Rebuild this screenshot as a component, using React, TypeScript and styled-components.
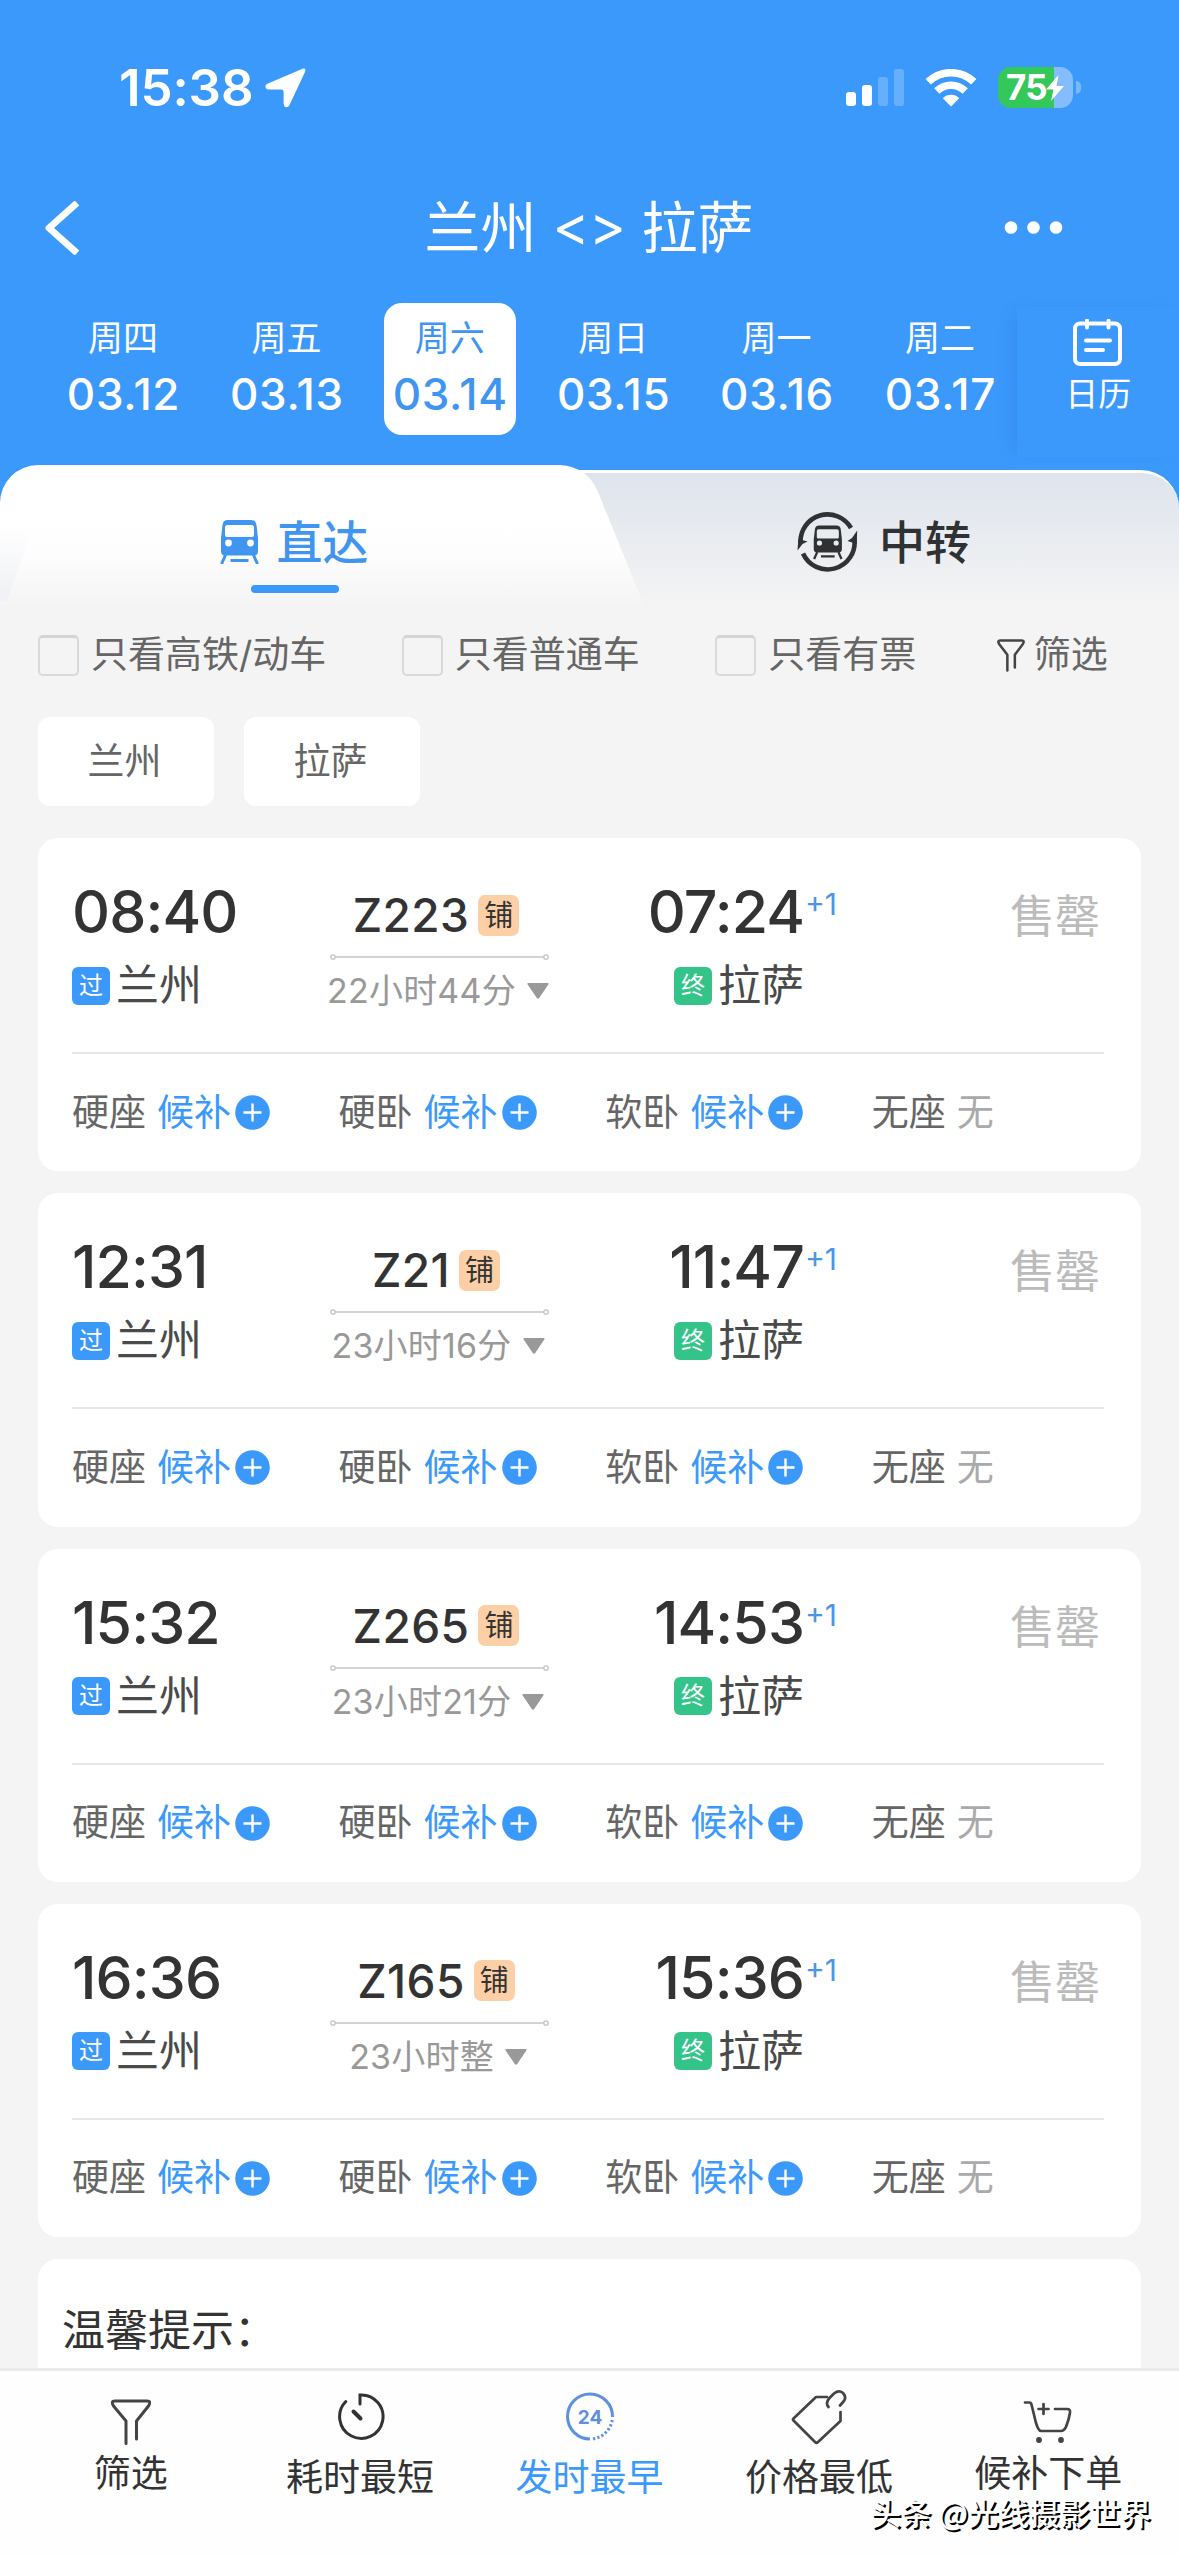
import React from "react";
import styled, { createGlobalStyle } from "styled-components";

const BLUE = "#3b99fc";
const INK = "#333333";

const GlobalStyle = createGlobalStyle`
  * { box-sizing: border-box; }
  body {
    margin: 0;
    background: #f4f4f4;
    font-family: Inter, "Noto Sans CJK SC", sans-serif;
    color: ${INK};
  }
  svg { display: block; flex: none; }
`;

const Screen = styled.div`
  position: relative;
  width: 1179px;
  height: 2556px;
  display: flex;
  flex-direction: column;
  overflow: hidden;
  background: #f4f4f4;
  white-space: nowrap;
`;

/* ---------- header ---------- */

const Header = styled.header`
  background: ${BLUE};
  color: #fff;
  height: 465px;
  flex: none;
`;

const StatusBar = styled.div`
  height: 175px;
  padding: 0 98px 0 119px;
  display: flex;
  align-items: center;
`;

const Clock = styled.span`
  font-size: 51px;
  font-weight: 600;
  line-height: 60px;
  letter-spacing: -0.1px;
  margin-right: 11px;
`;

const StatusIcons = styled.div`
  margin-left: auto;
  display: flex;
  align-items: center;
  gap: 21px;
`;

const Power = styled.div`
  display: flex;
  align-items: center;
  gap: 3px;
`;

const Battery = styled.div`
  display: flex;
  align-items: center;
  width: 75px;
  height: 41px;
  padding-left: 8px;
  border-radius: 13px;
  background: linear-gradient(to right, #34c759 56px, #83bdfd 56px);
  font-size: 35px;
  font-weight: 700;
  letter-spacing: -0.8px;
  line-height: 41px;
`;

const BatteryBolt = styled.svg`
  margin-left: -1px;
`;

const BatteryNub = styled.i`
  width: 5px;
  height: 13px;
  border-radius: 0 5px 5px 0;
  background: #79b8fd;
`;

const NavBar = styled.div`
  height: 106px;
  padding: 0 115px 0 44px;
  display: grid;
  grid-template-columns: 150px 1fr 80px;
  align-items: center;
  justify-items: start;
`;

const Title = styled.h1`
  margin: 0;
  justify-self: center;
  display: flex;
  align-items: center;
  gap: 16px;
  font-size: 56px;
  font-weight: 400;
  line-height: 66px;
`;

const Swap = styled.span`
  padding-bottom: 4px;
  font-size: 56px;
  letter-spacing: -0.5px;
`;

const NavMore = styled.div`
  justify-self: end;
`;

const DateStrip = styled.div`
  display: flex;
  align-items: flex-start;
  padding: 22px 0 0 57px;
`;

const Day = styled.div<{ $active?: boolean }>`
  width: 132px;
  height: 132px;
  margin-right: 31.4px;
  padding-top: 15px;
  border-radius: 18px;
  display: flex;
  flex-direction: column;
  align-items: center;
  gap: 14px;
  background: ${(p) => (p.$active ? "#fff" : "transparent")};
  color: ${(p) => (p.$active ? "#3f95f0" : "#fff")};
`;

const Weekday = styled.span`
  font-size: 35px;
  line-height: 40px;
`;

const DayDate = styled.span`
  padding-left: 1px;
  font-size: 44px;
  font-weight: 450;
  line-height: 45px;
  letter-spacing: 0.7px;
`;

const Calendar = styled.div`
  flex: 1;
  height: 150px;
  margin: 4px 0 0 -20px;
  padding-top: 12px;
  display: flex;
  flex-direction: column;
  align-items: center;
  gap: 7px;
  font-size: 33px;
  line-height: 40px;
  background: ${BLUE};
  box-shadow: -8px 0 16px -6px rgba(30, 90, 170, 0.2);
`;

/* ---------- tabs ---------- */

const Tabs = styled.nav`
  display: flex;
  height: 145px;
  flex: none;
  background: linear-gradient(${BLUE} 60px, #f4f4f4 60px);
`;

const DirectTab = styled.div`
  position: relative;
  z-index: 1;
  width: 648px;
  padding: 45px 58px 0 0;
  background: linear-gradient(#fff 60px, #fdfdfe 90px, #f4f4f4 142px);
  clip-path: path("M0 38 A38 38 0 0 1 38 0 H560 Q588 2 598 27 L646 145 H0 Z");
  color: #3f95f0;
  &::before {
    content: "";
    position: absolute;
    left: 0;
    top: 60px;
    width: 34px;
    height: 76px;
    background: linear-gradient(rgba(236, 240, 244, 0), rgba(236, 240, 244, 0.7));
    clip-path: polygon(0 0, 100% 0, 20% 100%, 0 100%);
  }
`;

const TransferTab = styled.div`
  flex: 1;
  margin: 5px 0 0 -88px;
  padding: 37px 0 0 31px;
  border-top: 3px solid #fff;
  border-radius: 0 38px 0 0;
  background: linear-gradient(#dee4ed, #f4f4f4 136px);
  color: #2f3133;
`;

const TabLabel = styled.div<{ $gap: number }>`
  display: flex;
  align-items: center;
  justify-content: center;
  gap: ${(p) => p.$gap}px;
  height: 64px;
  padding-right: 2px;
  font-size: 46px;
  font-weight: 500;
  line-height: 64px;
`;

const TabUnderline = styled.i`
  display: block;
  width: 88px;
  height: 8px;
  margin: 11px auto 0;
  border-radius: 4px;
  background: ${BLUE};
`;

/* ---------- filters ---------- */

const FilterRow = styled.div`
  display: flex;
  align-items: center;
  height: 90px;
  flex: none;
  padding-left: 38px;
  font-size: 37px;
  line-height: 44px;
  color: #666;
`;

const CheckItem = styled.label`
  display: flex;
  align-items: center;
  gap: 12px;
  margin-right: 75.5px;
`;

const Box = styled.i`
  width: 41px;
  height: 41px;
  border: 2px solid #d9d9d9;
  border-top: 3px solid #d4d4d4;
  border-radius: 5px;
`;

const FilterButton = styled.div`
  display: flex;
  align-items: center;
  gap: 9px;
  margin-left: 5px;
`;

const Chips = styled.div`
  display: flex;
  flex: none;
  gap: 30px;
  padding: 17px 38px 32px;
`;

const Chip = styled.span`
  width: 176px;
  height: 89px;
  padding-right: 3px;
  border-radius: 12px;
  background: #fff;
  color: #666;
  font-size: 37px;
  line-height: 89px;
  text-align: center;
`;

/* ---------- train list ---------- */

const List = styled.main`
  flex: 1;
  min-height: 0;
  overflow: hidden;
  display: flex;
  flex-direction: column;
  gap: 22px;
  padding: 0 38px;
`;

const Card = styled.article`
  flex: none;
  height: 333.25px;
  padding: 0 37px 0 34px;
  border-radius: 20px;
  background: #fff;
`;

const Summary = styled.div`
  display: flex;
  align-items: flex-start;
  height: 216px;
  padding-top: 44px;
  border-bottom: 2px solid #e6e6e6;
`;

const Stop = styled.div<{ $width: number; $end?: boolean }>`
  width: ${(p) => p.$width}px;
  display: flex;
  flex-direction: column;
  align-items: ${(p) => (p.$end ? "flex-end" : "flex-start")};
  gap: 20px;
`;

const Time = styled.span`
  font-size: 59px;
  font-weight: 450;
  line-height: 60px;
  letter-spacing: -0.9px;
`;

const Station = styled.div`
  display: flex;
  align-items: center;
  gap: 6px;
  font-size: 43px;
  line-height: 47px;
  color: #4a4a4a;
`;

const StopBadge = styled.i<{ $color: string }>`
  width: 38px;
  height: 38px;
  border-radius: 6px;
  background: ${(p) => p.$color};
  color: #fff;
  font-style: normal;
  font-size: 24px;
  line-height: 38px;
  text-align: center;
`;

const Route = styled.div`
  width: 219px;
  padding-top: 8px;
  display: flex;
  flex-direction: column;
  align-items: center;
`;

const TrainNo = styled.div`
  display: flex;
  align-items: center;
  gap: 9px;
  margin-bottom: 13px;
  padding-right: 7px;
  font-size: 46px;
  font-weight: 450;
  letter-spacing: 0.4px;
  line-height: 50px;
`;

const BerthBadge = styled.i`
  width: 41px;
  height: 41px;
  border-radius: 7px;
  background: #fdcfa6;
  font-style: normal;
  font-weight: 400;
  font-size: 29px;
  letter-spacing: 0;
  line-height: 41px;
  text-align: center;
`;

const Duration = styled.div`
  display: flex;
  align-items: center;
  gap: 11px;
  margin-top: 10px;
  padding-right: 3px;
  font-size: 34px;
  line-height: 40px;
  letter-spacing: 0.2px;
  color: #999;
`;

const NextDay = styled.span`
  flex: 1;
  padding: 4px 0 0 1px;
  font-size: 30px;
  line-height: 36px;
  color: #4a96e6;
`;

const SoldOut = styled.span`
  font-size: 45px;
  line-height: 69px;
  margin-right: 4px;
  color: #bbb;
`;

const Seats = styled.div`
  display: grid;
  grid-template-columns: repeat(3, 266.6px) 1fr;
  align-items: center;
  height: 117px;
  font-size: 37px;
  line-height: 44px;
  color: #666;
`;

const Seat = styled.div`
  display: flex;
  align-items: center;
  gap: 11px;
`;

const Waitlist = styled.span`
  display: flex;
  align-items: center;
  gap: 4px;
  color: ${BLUE};
`;

const NoSeat = styled.span`
  color: #aaa;
`;

const Tips = styled.section`
  flex: none;
  height: 200px;
  padding: 45px 24px;
  border-radius: 20px;
  background: #fff;
  font-size: 43px;
  line-height: 52px;
`;

/* ---------- bottom bar ---------- */

const BottomBar = styled.footer`
  flex: none;
  display: flex;
  height: 188px;
  padding: 0 16px;
  border-top: 3px solid #ebebeb;
  background: #fefefe;
`;

const SortItem = styled.div<{ $active?: boolean; $raised?: boolean }>`
  flex: 1;
  display: flex;
  flex-direction: column;
  align-items: center;
  gap: ${(p) => (p.$raised ? 8 : 12)}px;
  padding-top: 16px;
  font-size: 37px;
  line-height: 37px;
  color: ${(p) => (p.$active ? BLUE : INK)};
`;

const Watermark = styled.div`
  position: absolute;
  right: 28px;
  bottom: 28px;
  font-family: "Noto Sans CJK SC", sans-serif;
  font-size: 30.5px;
  font-weight: 500;
  line-height: 31px;
  color: #fff;
  text-shadow: 2px 2px 0 #000;
`;

/* ---------- icons ---------- */

const LocationIcon = () => (
  <svg width="41" height="40" viewBox="0 0 41 40" fill="#fff">
    <path d="M37.500 .8Q41.200-.4 40.200 3.500L24.500 37Q23 40 20.500 39Q18.600 38.200 18.600 35V24Q18.600 21.600 16.300 21.600H5Q1.200 21.600 .5 19.300Q-.2 17 3 15.500Z" />
  </svg>
);

const SignalIcon = () => (
  <svg width="59" height="38" viewBox="0 0 59 38" fill="#fff">
    <rect x="1" y="23" width="10" height="14" rx="3" />
    <rect x="17" y="16" width="10" height="21" rx="3" />
    <rect x="33" y="8" width="10" height="29" rx="3" opacity=".22" />
    <rect x="49" y="0" width="10" height="37" rx="3" opacity=".22" />
  </svg>
);

const WifiIcon = () => (
  <svg width="52" height="38" viewBox="0 0 52 38" fill="none" stroke="#fff">
    <path d="M3.200 12.800A33 33 0 0 1 48.800 12.800" strokeWidth="7.500" />
    <path d="M11.800 22A20.500 20.500 0 0 1 40.200 22" strokeWidth="7.500" />
    <path d="M26 37.500L17.800 29.200A11.600 11.600 0 0 1 34.200 29.200Z" fill="#fff" stroke="none" />
  </svg>
);

const BackIcon = () => (
  <svg width="38" height="54" viewBox="0 0 38 54" fill="none" stroke="#fff" strokeWidth="6.800">
    <path d="M33 2L5 27L33 52" strokeLinejoin="round" />
  </svg>
);

const MoreIcon = () => (
  <svg width="60" height="14" viewBox="0 0 60 14" fill="#fff">
    <circle cx="7" cy="6.500" r="6.300" />
    <circle cx="29.500" cy="6.500" r="6.300" />
    <circle cx="52" cy="6.500" r="6.300" />
  </svg>
);

const CalendarIcon = () => (
  <svg width="50" height="48" viewBox="0 0 50 48" fill="none" stroke="#fff" strokeWidth="4" strokeLinecap="round">
    <path d="M11 4.500H7a5 5 0 0 0-5 5V40a5 5 0 0 0 5 5H42a5 5 0 0 0 5-5V9.500a5 5 0 0 0-5-5H38M17 4.500H32M14 1.500V8.500M35.500 1.500V8.500M13 21.500H37M13 31H30" />
  </svg>
);

const TrainGlyph = ({ hole }: { hole: string }) => (
  <>
    <path
      fill="currentColor"
      fillRule="evenodd"
      d="M8 0H31Q36 0 36.500 5L38 18V31Q38 35.500 34 35.500H5Q1 35.500 1 31V18L2.500 5Q3 0 8 0ZM7.500 5Q5 5 5 7.500V15Q5 17 7 17H32Q34 17 34 15V7.500Q34 5 31.500 5Z"
    />
    <circle cx="8.500" cy="23" r="3.400" fill={hole} />
    <circle cx="30.500" cy="23" r="3.400" fill={hole} />
    <path d="M5.500 35L1.500 44M33.500 35L37.500 44M10.500 40.500H28.500" fill="none" stroke="currentColor" strokeWidth="3" />
  </>
);

const TrainIcon = () => (
  <svg width="39" height="44" viewBox="0 0 39 44">
    <TrainGlyph hole="#fff" />
  </svg>
);

const TransferIcon = () => (
  <svg width="62" height="62" viewBox="0 0 62 62">
    <g fill="none" stroke="currentColor" strokeWidth="4.600">
      <path d="M3.600 32A27 27 0 0 1 54 17" />
      <path d="M57.400 28A27 27 0 0 1 6 42.500" />
    </g>
    <path fill="currentColor" d="M1.300 28L10.500 30.500L5.500 33L.5 39.500ZM59.700 33L50.500 30L55 27L60.200 19.500Z" />
    <g transform="translate(16 14.500) scale(.76)">
      <TrainGlyph hole="#e9edf2" />
    </g>
  </svg>
);

const FunnelIcon = () => (
  <svg
    width="28"
    height="33"
    viewBox="0 0 40 47"
    fill="none"
    stroke="#444"
    strokeWidth="3.600"
    strokeLinejoin="round"
    strokeLinecap="round"
  >
    <path d="M14.800 45V22.500L3 7Q.2 2 4.500 2H35.500Q39.800 2 37 7L25.500 22.500V40.500" />
  </svg>
);

const RouteLine = () => (
  <svg width="219" height="8" viewBox="0 0 219 8" fill="none" stroke="#c4c4c4" strokeWidth="1.300">
    <circle cx="3" cy="4" r="2.200" />
    <path d="M5.200 4H213.800" strokeWidth="1.500" />
    <circle cx="216" cy="4" r="2.200" />
  </svg>
);

const DownIcon = () => (
  <svg width="22" height="16" viewBox="0 0 22 16">
    <path d="M1.500 0H20.500Q22.500 0 21 2L12.200 15Q11 16.500 9.800 15L1 2Q-.5 0 1.500 0Z" fill="#999" />
  </svg>
);

const PlusIcon = () => (
  <svg width="35" height="35" viewBox="0 0 35 35">
    <circle cx="17.500" cy="17.500" r="17.300" fill={BLUE} />
    <path d="M8.500 17.500H26.500M17.500 8.500V26.500" stroke="#fff" strokeWidth="2.400" />
  </svg>
);

const TimerIcon = () => (
  <svg width="50" height="60" viewBox="0 0 50 60" fill="none" stroke="#333" strokeWidth="3" strokeLinecap="round">
    <path d="M10.800 14.500A21.700 21.700 0 1 0 25 8V17" />
    <path d="M18.500 24.500L25.500 31.500" strokeWidth="4" />
  </svg>
);

const Clock24Icon = () => (
  <svg width="54" height="60" viewBox="0 0 54 60" fill="none" stroke="#5f8fe0" strokeWidth="3">
    <path d="M27 52A22.500 22.500 0 1 1 49.500 30" />
    <path d="M49.200 33A22.500 22.500 0 0 1 28 52" strokeDasharray="2.200 2.200" />
    <text x="27" y="36.500" textAnchor="middle" fill="#5f8fe0" stroke="none" fontSize="19" fontWeight="700">
      24
    </text>
  </svg>
);

const TagIcon = () => (
  <svg width="56" height="60" viewBox="0 0 56 60" fill="none" stroke="#444" strokeWidth="2.700" strokeLinejoin="round" strokeLinecap="round">
    <path d="M36 10H25L2.500 31.500Q1.500 32.500 2.500 33.500L24 55Q25.500 56.500 27 55L49.500 34V25" />
    <path d="M37.500 20Q34 16 38.500 11L43 6.500Q48 2.500 52 6Q56 10.500 52.500 14.500L49 18.500" />
  </svg>
);

const CartIcon = () => (
  <svg width="50" height="60" viewBox="0 0 50 60" fill="none" stroke="#444" strokeWidth="2.700" strokeLinejoin="round" strokeLinecap="round">
    <path d="M2 15.500H6.500Q8 15.500 8.500 17.500L13 36Q15.500 44 18 44H38Q41 44 43 40Q46 32.500 47 25.500Q47.500 22 44 22H32" />
    <path d="M15.500 22H25.500M20.500 17V27" />
    <circle cx="16" cy="53" r="2.900" fill="#444" stroke="none" />
    <circle cx="38" cy="53" r="2.900" fill="#444" stroke="none" />
  </svg>
);

const FunnelSortIcon = () => (
  <svg width="44" height="60" viewBox="0 0 44 60" fill="none" stroke="#444" strokeWidth="3" strokeLinejoin="round" strokeLinecap="round">
    <path d="M17 56.500V34L4.500 19Q1.500 14 6 14H38Q42.500 14 39.500 19L27.500 34V52" />
  </svg>
);

/* ---------- data ---------- */

const days = [
  ["周四", "03.12"],
  ["周五", "03.13"],
  ["周六", "03.14"],
  ["周日", "03.15"],
  ["周一", "03.16"],
  ["周二", "03.17"],
];

const trains = [
  { no: "Z223", depart: "08:40", arrive: "07:24", duration: "22小时44分" },
  { no: "Z21", depart: "12:31", arrive: "11:47", duration: "23小时16分" },
  { no: "Z265", depart: "15:32", arrive: "14:53", duration: "23小时21分" },
  { no: "Z165", depart: "16:36", arrive: "15:36", duration: "23小时整" },
];

const TrainCard = ({ train }: { train: (typeof trains)[number] }) => (
  <Card>
    <Summary>
      <Stop $width={258}>
        <Time>{train.depart}</Time>
        <Station>
          <StopBadge $color={BLUE}>过</StopBadge>
          兰州
        </Station>
      </Stop>
      <Route>
        <TrainNo>
          {train.no}
          <BerthBadge>铺</BerthBadge>
        </TrainNo>
        <RouteLine />
        <Duration>
          {train.duration}
          <DownIcon />
        </Duration>
      </Route>
      <Stop $width={255} $end>
        <Time>{train.arrive}</Time>
        <Station>
          <StopBadge $color="#34c48a">终</StopBadge>
          拉萨
        </Station>
      </Stop>
      <NextDay>+1</NextDay>
      <SoldOut>售罄</SoldOut>
    </Summary>
    <Seats>
      {["硬座", "硬卧", "软卧"].map((name) => (
        <Seat key={name}>
          {name}
          <Waitlist>
            候补
            <PlusIcon />
          </Waitlist>
        </Seat>
      ))}
      <Seat>
        无座
        <NoSeat>无</NoSeat>
      </Seat>
    </Seats>
  </Card>
);

export default function App() {
  return (
    <Screen>
      <GlobalStyle />
      <Header>
        <StatusBar>
          <Clock>15:38</Clock>
          <LocationIcon />
          <StatusIcons>
            <SignalIcon />
            <WifiIcon />
            <Power>
              <Battery>
                75
                <BatteryBolt width="18" height="26" viewBox="0 0 18 26" fill="#fff">
                  <path d="M12.500 0L0 14.500H7.500L5 26L18 11H10.500Z" />
                </BatteryBolt>
              </Battery>
              <BatteryNub />
            </Power>
          </StatusIcons>
        </StatusBar>
        <NavBar>
          <BackIcon />
          <Title>
            <span>兰州</span>
            <Swap>&lt;&gt;</Swap>
            <span>拉萨</span>
          </Title>
          <NavMore>
            <MoreIcon />
          </NavMore>
        </NavBar>
        <DateStrip>
          {days.map(([weekday, date]) => (
            <Day key={date} $active={date === "03.14"}>
              <Weekday>{weekday}</Weekday>
              <DayDate>{date}</DayDate>
            </Day>
          ))}
          <Calendar>
            <CalendarIcon />
            日历
          </Calendar>
        </DateStrip>
      </Header>

      <Tabs>
        <DirectTab>
          <TabLabel $gap={18}>
            <TrainIcon />
            直达
          </TabLabel>
          <TabUnderline />
        </DirectTab>
        <TransferTab>
          <TabLabel $gap={20}>
            <TransferIcon />
            中转
          </TabLabel>
        </TransferTab>
      </Tabs>

      <FilterRow>
        {["只看高铁/动车", "只看普通车", "只看有票"].map((label) => (
          <CheckItem key={label}>
            <Box />
            {label}
          </CheckItem>
        ))}
        <FilterButton>
          <FunnelIcon />
          筛选
        </FilterButton>
      </FilterRow>

      <Chips>
        <Chip>兰州</Chip>
        <Chip>拉萨</Chip>
      </Chips>

      <List>
        {trains.map((train) => (
          <TrainCard key={train.no} train={train} />
        ))}
        <Tips>温馨提示：</Tips>
      </List>

      <BottomBar>
        <SortItem $raised>
          <FunnelSortIcon />
          筛选
        </SortItem>
        <SortItem>
          <TimerIcon />
          耗时最短
        </SortItem>
        <SortItem $active>
          <Clock24Icon />
          发时最早
        </SortItem>
        <SortItem>
          <TagIcon />
          价格最低
        </SortItem>
        <SortItem $raised>
          <CartIcon />
          候补下单
        </SortItem>
      </BottomBar>
      <Watermark>头条 @光线摄影世界</Watermark>
    </Screen>
  );
}
